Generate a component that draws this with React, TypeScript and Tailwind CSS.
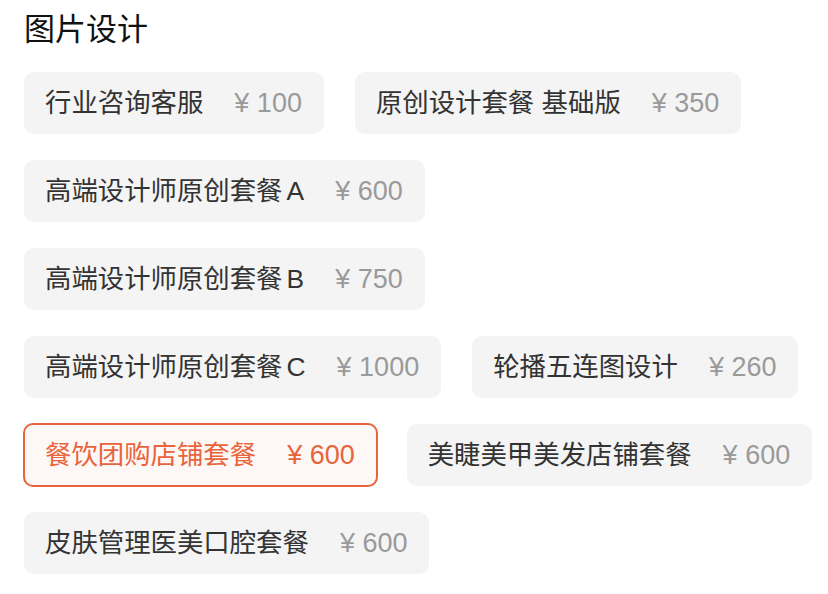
import React from "react";

type Item = { name: string; price: string; active?: boolean };

const rows: Item[][] = [
  [
    { name: "行业咨询客服", price: "¥ 100" },
    { name: "原创设计套餐 基础版", price: "¥ 350" },
  ],
  [{ name: "高端设计师原创套餐A", price: "¥ 600" }],
  [{ name: "高端设计师原创套餐B", price: "¥ 750" }],
  [
    { name: "高端设计师原创套餐C", price: "¥ 1000" },
    { name: "轮播五连图设计", price: "¥ 260" },
  ],
  [
    { name: "餐饮团购店铺套餐", price: "¥ 600", active: true },
    { name: "美睫美甲美发店铺套餐", price: "¥ 600" },
  ],
  [{ name: "皮肤管理医美口腔套餐", price: "¥ 600" }],
];

function Name({ text }: { text: string }) {
  const m = text.match(/^(.*?)([A-Z])$/);
  if (m) {
    return (
      <span className="text-[26.4px]">
        {m[1]}
        <span className="ml-[4px]">{m[2]}</span>
      </span>
    );
  }
  return <span className="text-[26.4px]">{text}</span>;
}

function Chip({ item }: { item: Item }) {
  if (item.active) {
    return (
      <div className="-my-[1px] -ml-[1px] flex h-[64px] shrink-0 items-center gap-[31px] whitespace-nowrap rounded-[10px] border-2 border-[#e8643c] bg-[#fdf7f5] pl-[20px] pr-[21px] text-[#e8643c]">
        <Name text={item.name} />
        <span className="text-[27px]">{item.price}</span>
      </div>
    );
  }
  return (
    <div className="flex h-[62px] shrink-0 items-center gap-[31px] whitespace-nowrap rounded-[10px] bg-[#f4f4f4] pl-[21px] pr-[22px] text-[#333333]">
      <Name text={item.name} />
      <span className="text-[27px] text-[#9a9a9a]">{item.price}</span>
    </div>
  );
}

export default function App() {
  return (
    <div
      className="min-h-[594px] w-[828px] overflow-hidden bg-white px-[24px] pt-[10px]"
      style={{ fontFamily: '"Liberation Sans", "Noto Sans CJK SC", sans-serif' }}
    >
      <h1 className="text-[31px] leading-[40px] text-[#111111]">图片设计</h1>
      <div className="mt-[22px] flex flex-col gap-[26px] leading-none">
        {rows.map((row, i) => (
          <div key={i} className={i === 4 ? "flex gap-[29px]" : "flex gap-[31px]"}>
            {row.map((item) => (
              <Chip key={item.name} item={item} />
            ))}
          </div>
        ))}
      </div>
    </div>
  );
}
